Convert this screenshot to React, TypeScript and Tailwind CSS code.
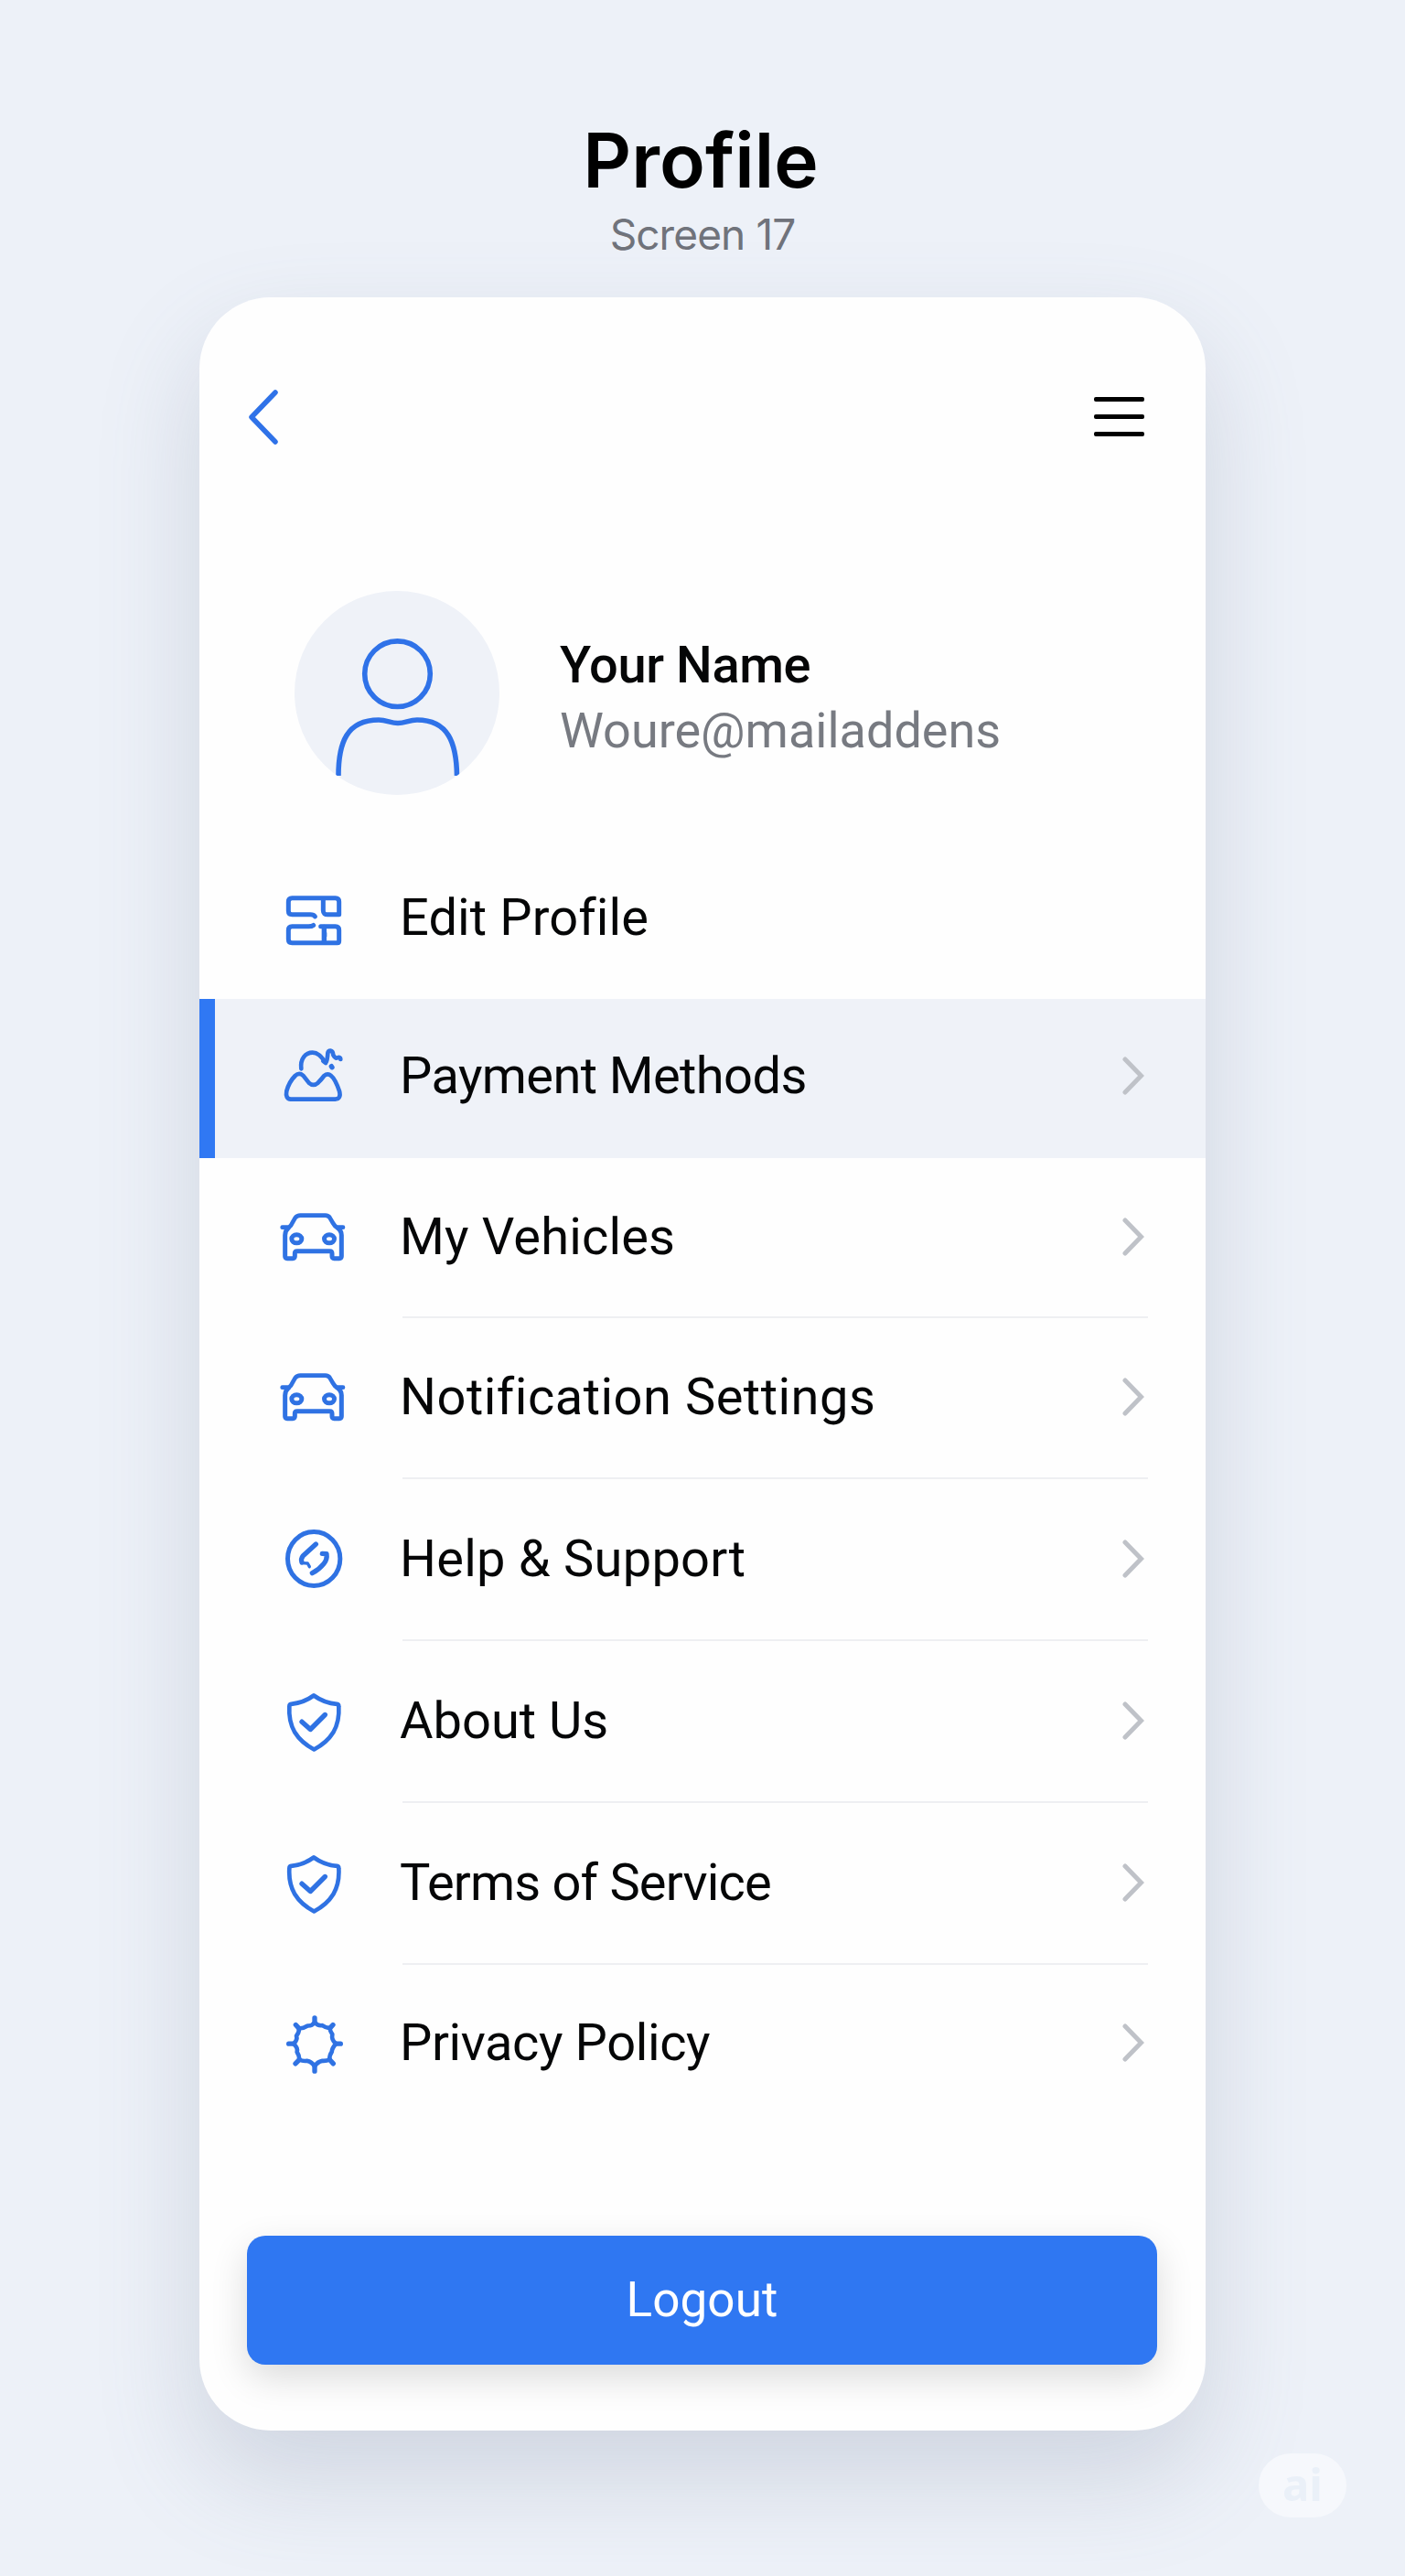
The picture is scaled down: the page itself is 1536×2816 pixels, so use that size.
import type { ReactNode } from 'react';

function RowIcon({ viewBox, children }: { viewBox: string; children: ReactNode }) {
  return (
    <svg
      viewBox={viewBox}
      className="h-16 w-16 shrink-0 overflow-visible text-[#2f72e3]"
      fill="none"
      stroke="currentColor"
      strokeWidth="15"
      strokeLinecap="round"
      strokeLinejoin="round"
    >
      {children}
    </svg>
  );
}

function EditIcon() {
  return (
    <RowIcon viewBox="63 61.5 192 192">
      <path d="M163 154 Q159 148 148 148 H88 Q76 148 76 136 V106 Q76 94 88 94 H230 Q242 94 242 106 V148 H206 Q190 149 190 134 V97" />
      <path d="M158 183 Q153 187 142 187 H88 Q76 187 76 199 V229 Q76 241 88 241 H236 Q242 241 242 235 V199 Q242 187 230 187 H182" />
      <path d="M193 189 V239" strokeWidth="16" />
      <path d="M197 208 V218" strokeWidth="10" />
    </RowIcon>
  );
}

function PaymentIcon() {
  return (
    <RowIcon viewBox="63 72 192 192">
      <path d="M118 145 C114 112 132 92 155 92 C174 92 184 107 198 124" strokeWidth="14" />
      <path d="M190 120 L198 126 Q204 117 205 94 Q206 86 214 86 Q222 87 223 100 Q230 112 236 109 Q247 105 247 114" strokeWidth="14" />
      <path d="M217 137 L219 140" strokeWidth="16" />
      <path d="M84 245 H229 Q250 244 243 218 Q229 178 216 168 Q205 158 193 168 Q184 180 173 191 Q158 204 143 191 L124 167 Q111 156 98 168 Q78 188 70 218 Q65 243 84 245 Z" strokeWidth="14" />
    </RowIcon>
  );
}

function CarIcon() {
  return (
    <RowIcon viewBox="63 60 192 192">
      <path d="M56 125 H78 Q85 120 89 110 L98 94 Q104 86 115 86 H197 Q207 86 212 94 L222 111 Q228 121 234 125 H255" strokeWidth="14" />
      <path d="M76 127 Q65 136 65 151 V220 Q65 227 72 227 H90 Q97 227 97 220 V210 Q97 203 105 203 H211 Q219 203 219 211 V220 Q219 227 226 227 H243 Q250 227 250 220 V151 Q250 137 237 127" />
      <ellipse cx="103" cy="163" rx="16.500" ry="13.500" />
      <ellipse cx="210" cy="163" rx="16.500" ry="13.500" />
    </RowIcon>
  );
}

function HelpIcon() {
  return (
    <RowIcon viewBox="63 66 192 192">
      <ellipse cx="159.500" cy="162" rx="86" ry="88.500" />
      <path d="M166 114 L124 152 Q116 162 120 174" strokeWidth="16" />
      <path d="M122 176 L139 177 L145 188" strokeWidth="10" />
      <path d="M187 145 L201 146 Q204 163 192 178 Q176 198 154 209" strokeWidth="16" />
    </RowIcon>
  );
}

function ShieldIcon() {
  return (
    <RowIcon viewBox="63 55.5 192 192">
      <path d="M159 69 Q194 94 235 97 Q241 98 241 105 Q244 154 223 190 Q202 224 160 246 Q118 224 97 190 Q76 154 79 105 Q79 98 85 97 Q126 93 159 69 Z" strokeWidth="14" />
      <path d="M120 155 L148 180 L196 132" strokeWidth="16" />
    </RowIcon>
  );
}

function BadgeIcon() {
  return (
    <RowIcon viewBox="63 61.5 192 192">
      <path
        d="M162 91 Q172 103 187 101 Q197 108 211 110 Q213 120 220 130 Q216 149 232 161 Q219 175 218 188 Q210 199 211 213 Q201 218 187 217 Q171 220 162 235 Q152 219 137 217 Q123 219 112 213 Q112 200 104 188 Q108 174 93 161 Q107 148 102 135 Q111 125 111 111 Q125 111 139 102 Q153 103 162 91 Z"
        strokeWidth="14"
      />
      <path d="M162 91 V76 M162 236 V251 M92 161 H77 M232 161 H247 M110 110 L100 99 M212 110 L222 99 M112 213 L99 226 M211 213 L223 226" strokeWidth="16" />
    </RowIcon>
  );
}

function ChevronRight() {
  return (
    <svg viewBox="0 0 24 42" className="h-[42px] w-6 shrink-0" fill="none" stroke="#bfc2c8" strokeWidth="5" strokeLinecap="round">
      <path d="M3 3 L20.500 21 L3 39" />
    </svg>
  );
}

const rows = [
  { label: 'Edit Profile', icon: <EditIcon />, box: 'mt-11 h-[179px] pl-[93px]', text: 'tracking-[0.1px]', chevron: false, divider: false },
  { label: 'Payment Methods', icon: <PaymentIcon />, box: 'h-[174px] border-l-[17px] border-[#3078f3] bg-[#eff2f8] pb-1.5 pl-[76px]', text: 'tracking-[-0.6px]', chevron: true, divider: false },
  { label: 'My Vehicles', icon: <CarIcon />, box: 'h-[175px] pb-[3px] pl-[93px]', text: 'tracking-[0.15px]', chevron: true, divider: true },
  { label: 'Notification Settings', icon: <CarIcon />, box: 'h-[176px] pb-[5px] pl-[93px]', text: 'tracking-[0.5px]', chevron: true, divider: true },
  { label: 'Help & Support', icon: <HelpIcon />, box: 'h-[177px] pb-[3px] pl-[93px]', text: 'tracking-[0.25px]', chevron: true, divider: true },
  { label: 'About Us', icon: <ShieldIcon />, box: 'h-[177px] pb-1 pl-[93px]', text: '', chevron: true, divider: true },
  { label: 'Terms of Service', icon: <ShieldIcon />, box: 'h-[177px] pb-[3px] pl-[93px]', text: 'tracking-[-0.8px]', chevron: true, divider: true },
  { label: 'Privacy Policy', icon: <BadgeIcon />, box: 'h-[176px] pb-[7px] pl-[93px]', text: 'tracking-[-0.4px]', chevron: true, divider: false },
];

export default function App() {
  return (
    <div className="relative flex h-[2816px] w-[1536px] flex-col items-center overflow-hidden bg-[#edf1f8] pt-32 font-[Roboto,sans-serif] text-[#050607]">
      <h1 className="flex h-24 items-center pr-1 font-[Inter,sans-serif] text-[82px] leading-none font-semibold text-black">Profile</h1>
      <p className="flex h-16 items-center font-[Inter,sans-serif] text-[46px] leading-none tracking-[-0.9px] text-[#70737b]">Screen 17</p>

      <main className="mt-[37px] flex h-[2332px] w-[1100px] shrink-0 flex-col rounded-[78px] bg-[#fefefe] shadow-[0_50px_110px_rgba(100,116,140,0.22)]">
        <header className="flex h-[261px] shrink-0 items-center justify-between pr-[67px] pl-[53px]">
          <button aria-label="Back">
            <svg viewBox="0 0 34 60" className="h-[60px] w-[34px]" fill="none" stroke="#2f72e8" strokeWidth="5.500" strokeLinecap="round" strokeLinejoin="round">
              <path d="M30 3 L4 30 L30 57" />
            </svg>
          </button>
          <button aria-label="Menu" className="flex w-[55px] flex-col gap-3.5">
            <span className="h-[5px] rounded-[2px] bg-black" />
            <span className="h-[5px] rounded-[2px] bg-black" />
            <span className="h-[5px] rounded-[2px] bg-black" />
          </button>
        </header>

        <section className="mt-[60px] flex h-[223px] shrink-0 items-center pl-[104px]">
          <div className="h-[223px] w-56 overflow-hidden rounded-full bg-[#eff2f8]">
            <svg viewBox="0 0 224 223" className="h-full w-full" fill="none" stroke="#2f72e8" strokeWidth="5.600">
              <circle cx="112.500" cy="90.700" r="35.800" />
              <path d="M48 202 C48 166 57 141 92 141 C101 141 105 144.500 113 144.500 C121 144.500 125 141 134 141 C168 141 177 166 177.500 202" />
            </svg>
          </div>
          <div className="flex flex-col pt-[11px] pl-[66px]">
            <h2 className="flex h-[72px] items-center text-[56px] leading-none font-medium tracking-[-0.4px]">Your Name</h2>
            <p className="flex h-[72px] items-center text-[54px] leading-none text-[#777a81]">Woure@mailaddens</p>
          </div>
        </section>

        <nav className="flex flex-col">
          {rows.map((row) => (
            <div key={row.label} className={`relative flex shrink-0 items-center pr-[67px] ${row.box}`}>
              {row.icon}
              <span className={`ml-[62px] flex-1 text-[56px] leading-none whitespace-nowrap ${row.text}`}>{row.label}</span>
              {row.chevron && <ChevronRight />}
              {row.divider && <span className="absolute right-[63px] bottom-0 left-[222px] h-[2px] bg-[#eeeff2]" />}
            </div>
          ))}
        </nav>

        <button className="mr-[53px] ml-[52px] mt-[120px] flex h-[141px] shrink-0 items-center justify-center rounded-[20px] bg-[#2f77f2] text-[53px] leading-none tracking-[0.1px] text-white shadow-[0_14px_40px_rgba(0,0,0,0.14)]">
          Logout
        </button>
      </main>

      <div className="absolute right-16 bottom-16 flex h-[70px] w-24 items-center justify-center rounded-[35px] bg-[#f6f8fc] pb-1 font-['Noto_Sans',sans-serif] text-[49px] leading-none font-bold text-[#eaf0f8]">
        ai
      </div>
    </div>
  );
}
